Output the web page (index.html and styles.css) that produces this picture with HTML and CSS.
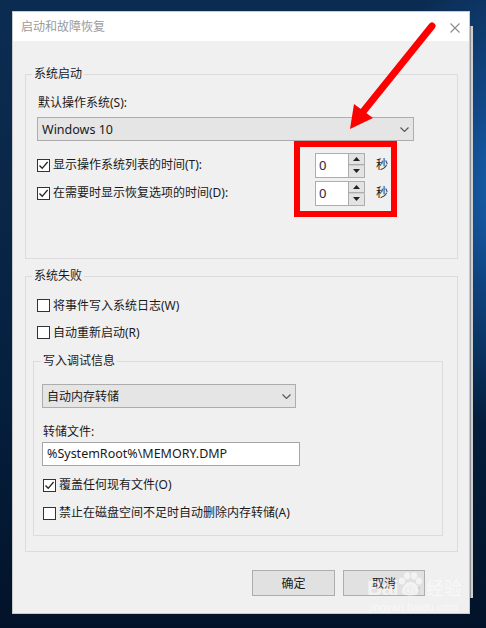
FILE: index.html
```html
<!DOCTYPE html>
<html lang="zh-CN">
<head>
	<meta charset="UTF-8">
	<title>启动和故障恢复</title>
	<link rel="stylesheet" href="styles.css">
</head>
<body>
	<div class="desk">
		<div class="behind"></div>

		<div class="dialog">
			<div class="titlebar">
				<span class="title">启动和故障恢复</span>
				<svg class="close" width="10" height="10" viewBox="0 0 10 10"><path d="M0.5 0.5L9.5 9.5M9.5 0.5L0.5 9.5" stroke="#8a8a8a" stroke-width="1.1"/></svg>
			</div>

			<div class="content">
				<fieldset class="group g1">
					<legend>系统启动</legend>
					<div class="label first">默认操作系统(S):</div>
					<div class="combo c-os">
						<span>Windows 10</span>
						<svg class="chev" width="9" height="5" viewBox="0 0 9 5"><path d="M0.5 0.5L4.5 4.5L8.5 0.5" fill="none" stroke="#555" stroke-width="1.1"/></svg>
					</div>
					<div class="row timed">
						<label class="check"><span class="box"><svg width="11" height="11" viewBox="0 0 11 11"><path d="M1.5 5.5L4.2 8.3L9.6 2" fill="none" stroke="#222" stroke-width="1.3"/></svg></span>显示操作系统列表的时间(T):</label>
						<div class="spin">
							<div class="spin-val">0</div>
							<div class="spin-btns">
								<span><svg width="7" height="4" viewBox="0 0 7 4"><path d="M0 4L3.5 0L7 4Z" fill="#222"/></svg></span>
								<span><svg width="7" height="4" viewBox="0 0 7 4"><path d="M0 0L3.5 4L7 0Z" fill="#222"/></svg></span>
							</div>
						</div>
						<span class="unit">秒</span>
					</div>
					<div class="row timed">
						<label class="check"><span class="box"><svg width="11" height="11" viewBox="0 0 11 11"><path d="M1.5 5.5L4.2 8.3L9.6 2" fill="none" stroke="#222" stroke-width="1.3"/></svg></span>在需要时显示恢复选项的时间(D):</label>
						<div class="spin">
							<div class="spin-val">0</div>
							<div class="spin-btns">
								<span><svg width="7" height="4" viewBox="0 0 7 4"><path d="M0 4L3.5 0L7 4Z" fill="#222"/></svg></span>
								<span><svg width="7" height="4" viewBox="0 0 7 4"><path d="M0 0L3.5 4L7 0Z" fill="#222"/></svg></span>
							</div>
						</div>
						<span class="unit">秒</span>
					</div>
				</fieldset>

				<fieldset class="group g2">
					<legend>系统失败</legend>
					<div class="row short first">
						<label class="check"><span class="box"></span>将事件写入系统日志(W)</label>
					</div>
					<div class="row short">
						<label class="check"><span class="box"></span>自动重新启动(R)</label>
					</div>

					<fieldset class="group g3">
						<legend>写入调试信息</legend>
						<div class="combo c-dump">
							<span>自动内存转储</span>
							<svg class="chev" width="9" height="5" viewBox="0 0 9 5"><path d="M0.5 0.5L4.5 4.5L8.5 0.5" fill="none" stroke="#555" stroke-width="1.1"/></svg>
						</div>
						<div class="label dump-label">转储文件:</div>
						<div class="field">%SystemRoot%\MEMORY.DMP</div>
						<div class="row inner first">
							<label class="check"><span class="box"><svg width="11" height="11" viewBox="0 0 11 11"><path d="M1.5 5.5L4.2 8.3L9.6 2" fill="none" stroke="#222" stroke-width="1.3"/></svg></span>覆盖任何现有文件(O)</label>
						</div>
						<div class="row inner">
							<label class="check"><span class="box"></span>禁止在磁盘空间不足时自动删除内存转储(A)</label>
						</div>
					</fieldset>
				</fieldset>
			</div>

			<div class="buttons">
				<button class="btn ok">确定</button>
				<button class="btn">取消</button>
			</div>
		</div>

		<!-- 标注 -->
		<div class="mark"></div>
		<svg class="arrow" width="486" height="160" viewBox="0 0 486 160">
			<path d="M432 26L362 113" stroke="#ff0000" stroke-width="7" stroke-linecap="round"/>
			<path d="M350 129L354 104L373 118Z" fill="#ff0000"/>
		</svg>

		<div class="watermark">
			<div class="wm-top">
				<span class="wm-bai">Bai</span>
				<svg class="paw" width="26" height="24" viewBox="0 0 26 24">
					<ellipse cx="5" cy="9" rx="3" ry="3.6" fill="#fff"/>
					<ellipse cx="10" cy="3.8" rx="3" ry="3.6" fill="#fff"/>
					<ellipse cx="17" cy="3.8" rx="3" ry="3.6" fill="#fff"/>
					<ellipse cx="22" cy="9" rx="3" ry="3.6" fill="#fff"/>
					<path d="M13.5 10C8 10 5 16 5 19.5C5 23 9 23.5 13.5 23.5C18 23.5 22 23 22 19.5C22 16 19 10 13.5 10Z" fill="#fff"/>
				</svg>
				<span class="wm-du">du</span>
				<span class="wm-jy">经验</span>
			</div>
			<div class="wm-url">jingyan.baidu.com</div>
		</div>
	</div>
</body>
</html>
```

FILE: styles.css
```css
html, body{
	margin: 0;
	padding: 0;
}
body{
	font-family: "Noto Sans", "Noto Sans CJK SC", sans-serif;
	font-size: 12px;
	line-height: 16px;
	color: #1a1a1a;
}
.desk{
	position: relative;
	width: 486px;
	height: 628px;
	overflow: hidden;
	padding: 12px 0 0 13px;
	box-sizing: border-box;
	background:
		radial-gradient(ellipse 150px 240px at 520px 190px, #1b6bc0 0%, rgba(20,90,170,0.6) 45%, rgba(10,50,110,0) 100%),
		linear-gradient(to bottom, #0b2c52 0%, #0a2748 30%, #05203f 60%, #021329 100%);
}
.behind{
	position: absolute;
	left: 470px;
	top: 26px;
	width: 3px;
	height: 572px;
	background: #cfcfcf;
	border-left: 1px solid #8e9298;
	box-sizing: border-box;
}

/* 对话框 */
.dialog{
	position: relative;
	width: 456px;
	height: 601px;
	background: #f0f0f0;
	box-shadow: 0 0 0 1px #c9c9c9;
}
.titlebar{
	display: flex;
	align-items: center;
	justify-content: space-between;
	height: 29px;
	padding: 0 9px 0 8px;
	background: #fff;
	box-sizing: border-box;
}
.title{
	color: #9b9b9b;
	padding-top: 1px;
}
.close{
	display: block;
	margin-top: 2px;
}
.content{
	padding: 25px 11px 0 12px;
}

/* 分组框 */
.group{
	margin: 0;
	padding: 0;
	border: 1px solid #dcdcdc;
	min-inline-size: 0;
}
.group legend{
	margin-left: 6px;
	padding: 0 2px;
	line-height: 16px;
}
.g1{
	padding: 0 0 51px 11px;
}
.g1 legend{
	margin-left: -5px;
}
.g2{
	margin-top: 9px;
	padding: 0 0 15px 0;
}
.g3{
	width: 410px;
	box-sizing: border-box;
	margin: 7px 0 0 7px;
	padding: 0 0 8px 8px;
}
.g3 legend{
	margin-left: -1px;
}

.label{
	padding-left: 1px;
}
.label.first{
	margin-top: 13px;
}

/* 下拉框 */
.combo{
	display: flex;
	align-items: center;
	justify-content: space-between;
	height: 24px;
	box-sizing: border-box;
	padding: 0 4px 0 4px;
	background: #e5e5e5;
	border: 1px solid #adadad;
}
.combo span{
	padding-top: 1px;
}
.c-os{
	margin-top: 6px;
	width: 377px;
	font-size: 12.5px;
}
.c-dump{
	margin-top: 15px;
	width: 254px;
}

/* 复选框 */
.row{
	display: flex;
	align-items: center;
	height: 28px;
}
.check{
	display: flex;
	align-items: center;
}
.box{
	display: flex;
	align-items: center;
	justify-content: center;
	width: 13px;
	height: 13px;
	margin-right: 3px;
	box-sizing: border-box;
	border: 1px solid #333;
	background: #fff;
}
.timed{
	display: grid;
	grid-template-columns: 278px 50px auto;
	align-items: center;
}
.g1 .c-os + .timed{
	margin-top: 10px;
}
.short{
	height: 27px;
	padding-left: 11px;
}
.short.first{
	margin-top: 8px;
}
.inner{
	padding-left: 1px;
}
.inner.first{
	margin-top: 5px;
}

/* 微调框 */
.spin{
	display: flex;
	height: 25px;
}
.spin-val{
	width: 34px;
	box-sizing: border-box;
	border: 1px solid #adadad;
	background: #fff;
	padding: 3px 0 0 3px;
	font-size: 13px;
	color: #1f2a3a;
}
.spin-btns{
	display: flex;
	flex-direction: column;
	width: 16px;
}
.spin-btns span{
	flex: 1;
	display: flex;
	align-items: center;
	justify-content: center;
	background: #e3e3e3;
	border: 1px solid #adadad;
	border-left: none;
}
.spin-btns span + span{
	border-top-color: #cfcfcf;
}
.unit{
	margin-left: 11px;
}

.dump-label{
	margin-top: 16px;
}
.field{
	margin-top: 2px;
	width: 258px;
	height: 24px;
	box-sizing: border-box;
	border: 1px solid #a6a6a6;
	background: #fff;
	padding: 3px 0 0 4px;
	font-size: 12.5px;
}

/* 按钮 */
.buttons{
	display: flex;
	justify-content: flex-end;
	gap: 8px;
	margin-top: 18px;
	padding-right: 44px;
}
.btn{
	width: 83px;
	height: 26px;
	margin: 0;
	padding: 0;
	background: #e1e1e1;
	border: 1px solid #adadad;
	font-family: "Noto Sans", "Noto Sans CJK SC", sans-serif;
	font-size: 12px;
	color: #1a1a1a;
}
.btn + .btn{
	width: 82px;
}

/* 红框与箭头 */
.mark{
	position: absolute;
	left: 294px;
	top: 141px;
	width: 103px;
	height: 76px;
	box-sizing: border-box;
	border: 6px solid #ff0000;
}
.arrow{
	position: absolute;
	left: 0;
	top: 0;
}

/* 水印 */
.watermark{
	position: absolute;
	left: 367px;
	top: 572px;
	color: rgba(255,255,255,0.72);
	opacity: 0.85;
}
.wm-top{
	display: flex;
	align-items: flex-end;
	height: 27px;
}
.wm-bai{
	font-family: "Liberation Sans", sans-serif;
	font-weight: bold;
	font-size: 21px;
	line-height: 22px;
	letter-spacing: -0.5px;
}
.paw{
	margin-left: -1px;
	margin-bottom: 3px;
	opacity: 0.75;
}
.wm-du{
	margin-left: -19px;
	font-family: "Liberation Sans", sans-serif;
	font-weight: bold;
	font-size: 13px;
	line-height: 16px;
	color: rgba(180,190,200,0.9);
	margin-bottom: 1px;
}
.wm-jy{
	margin-left: 6px;
	font-size: 18px;
	line-height: 22px;
}
.wm-url{
	font-family: "Liberation Sans", sans-serif;
	font-size: 11px;
	line-height: 14px;
	margin-top: 1px;
	padding-left: 2px;
}
```
